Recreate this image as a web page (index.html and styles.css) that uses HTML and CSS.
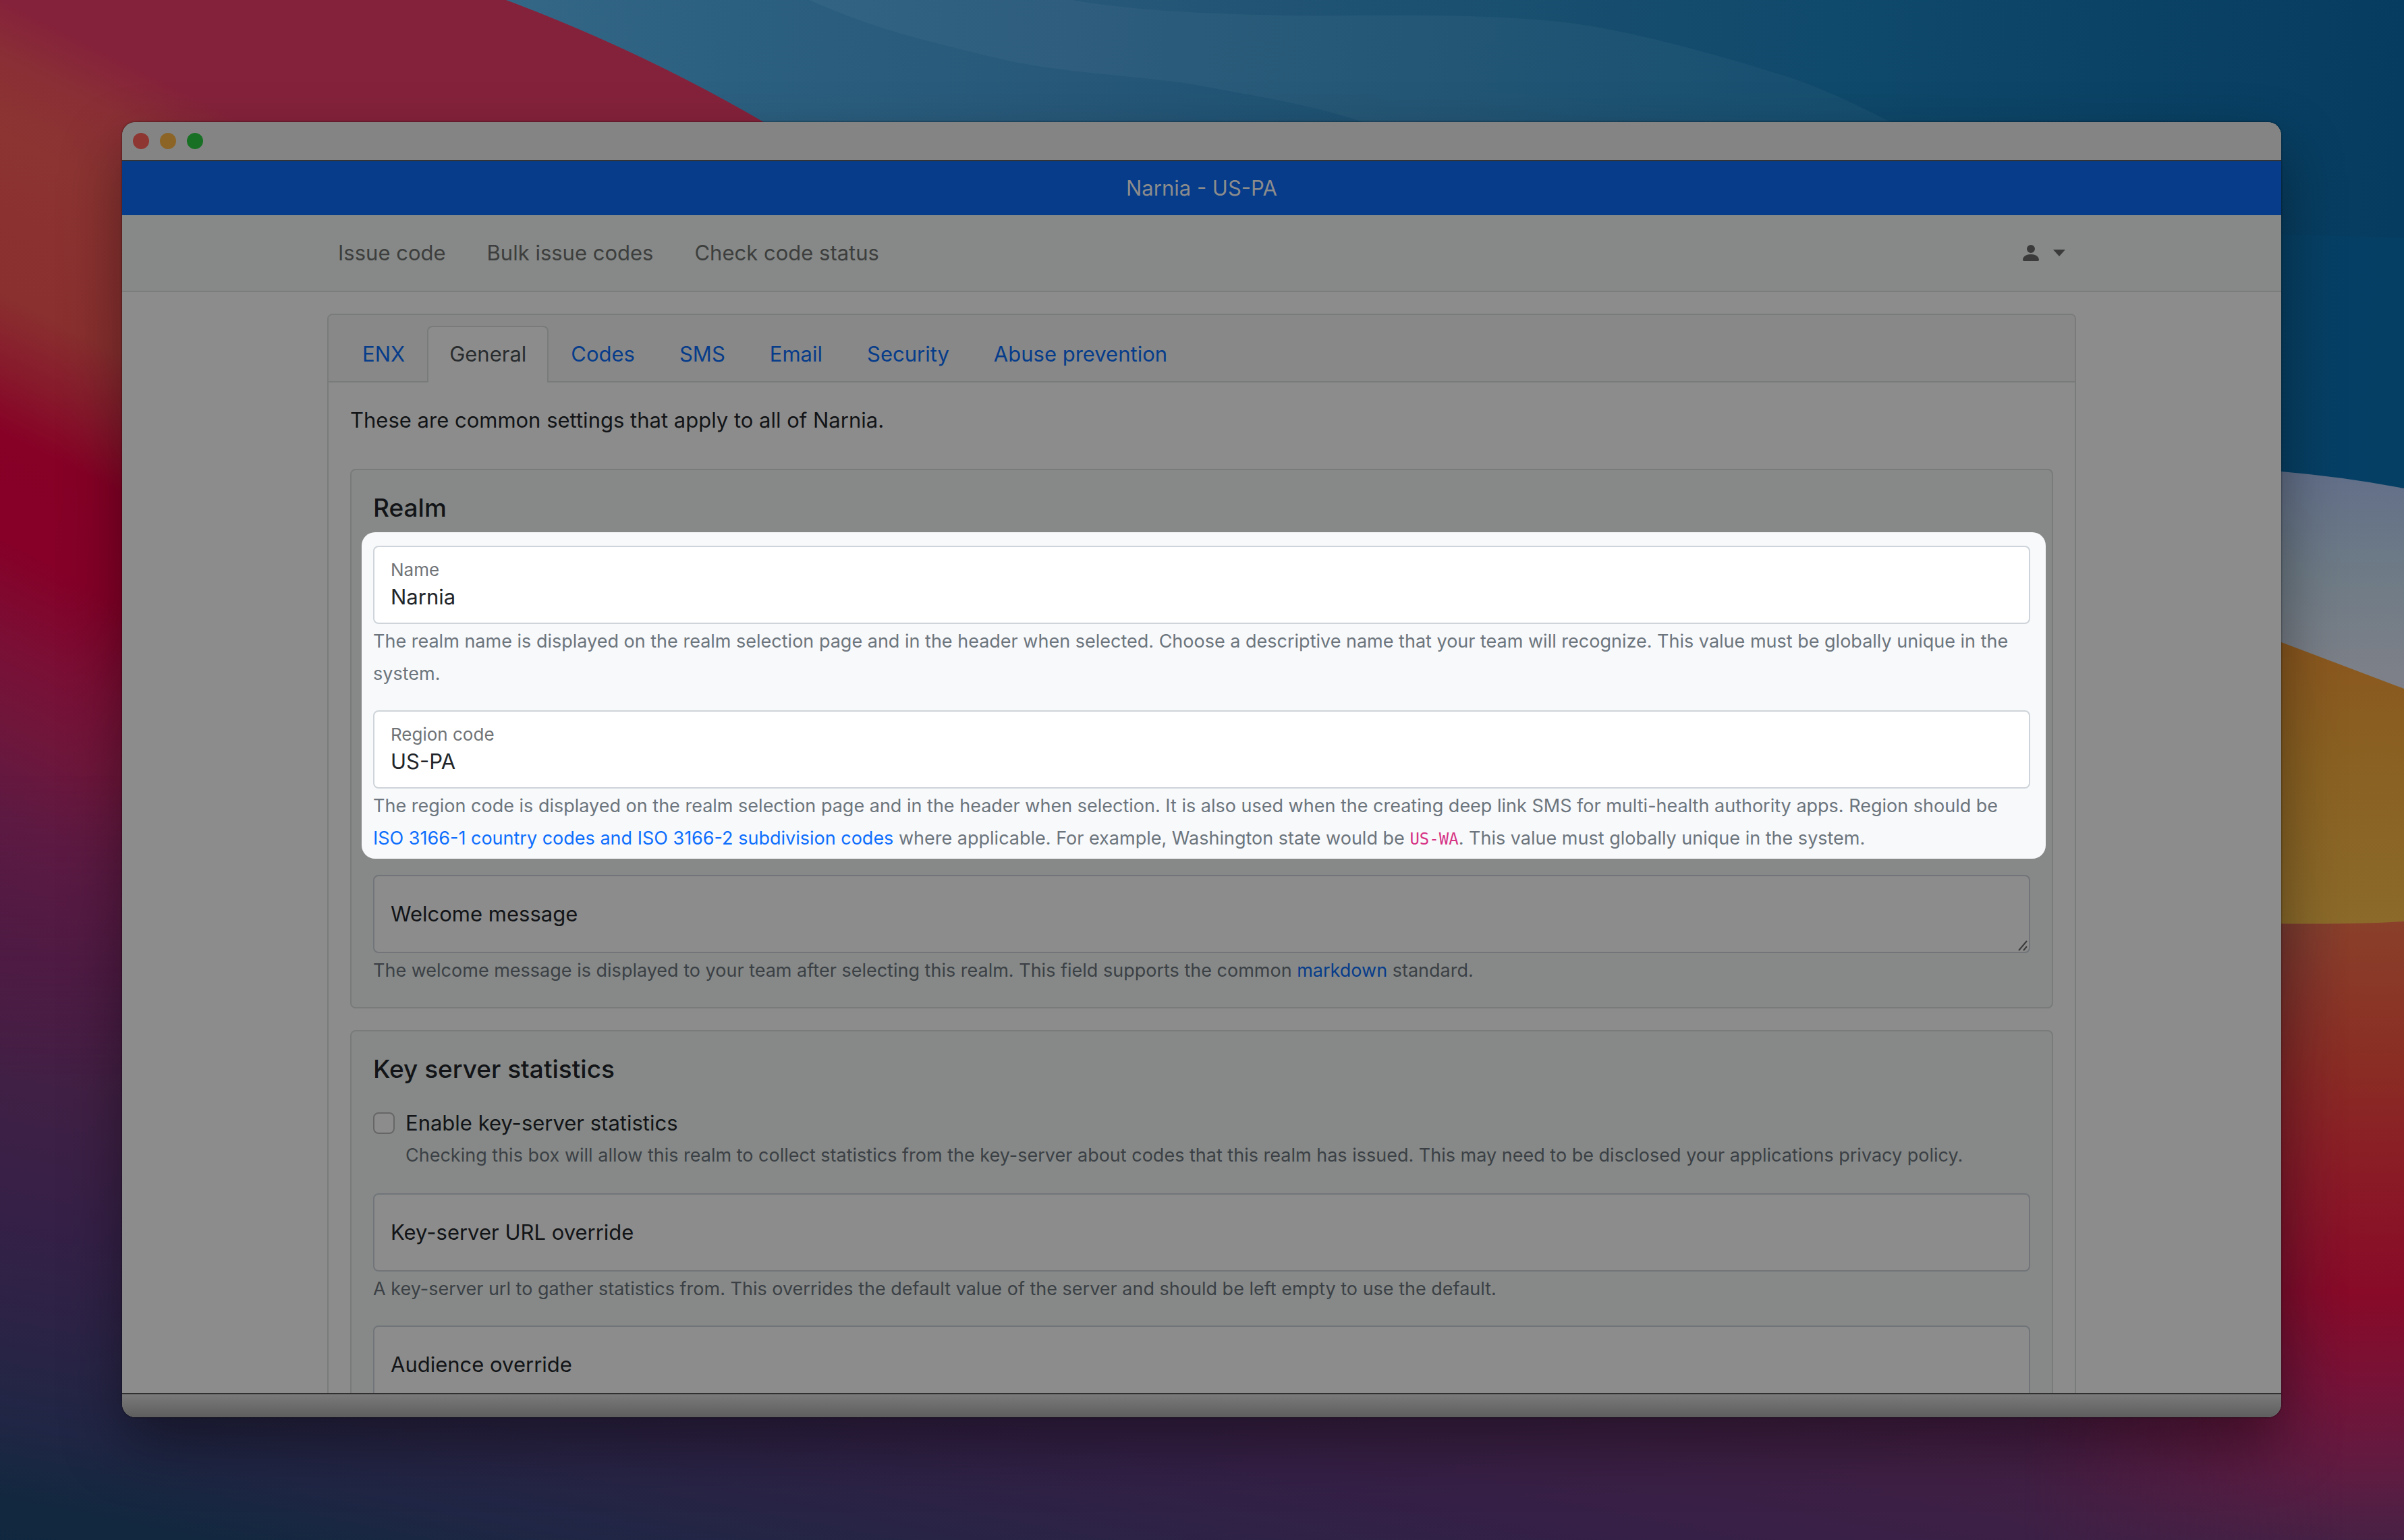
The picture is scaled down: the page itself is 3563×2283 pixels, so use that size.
FILE: index.html
```html
<!DOCTYPE html>
<html lang="en">
<head>
<meta charset="utf-8">
<meta name="viewport" content="width=device-width, initial-scale=1">
<title>Narnia - US-PA</title>
<link rel="stylesheet" href="styles.css">
</head>
<body>
<div class="desktop">
  <svg class="wallpaper" viewBox="0 0 3563 2283" preserveAspectRatio="none" aria-hidden="true">
    <defs>
      <linearGradient id="sky" gradientUnits="userSpaceOnUse" x1="750" y1="0" x2="3563" y2="120">
        <stop offset="0" stop-color="#346786"/><stop offset=".12" stop-color="#2c6080"/><stop offset=".3" stop-color="#275879"/>
        <stop offset=".5" stop-color="#1b5070"/><stop offset=".7" stop-color="#0f496b"/><stop offset="1" stop-color="#063c60"/>
      </linearGradient>
      <linearGradient id="ember" gradientUnits="userSpaceOnUse" x1="0" y1="0" x2="-560" y2="1120">
        <stop offset="0" stop-color="#85223b"/><stop offset=".06" stop-color="#8a2f35"/><stop offset=".14" stop-color="#8c3432"/>
        <stop offset=".31" stop-color="#8a302f"/><stop offset=".38" stop-color="#871c2c"/><stop offset=".46" stop-color="#870026"/>
        <stop offset=".57" stop-color="#860028"/><stop offset=".68" stop-color="#7a0f35"/><stop offset=".76" stop-color="#70163b"/>
        <stop offset=".86" stop-color="#5e1a42"/><stop offset="1" stop-color="#4e1b44"/>
      </linearGradient>
      <linearGradient id="dusk" gradientUnits="userSpaceOnUse" x1="0" y1="1000" x2="-250" y2="2250">
        <stop offset="0" stop-color="#741639"/><stop offset=".15" stop-color="#5e1a44"/><stop offset=".31" stop-color="#4f1b44"/>
        <stop offset=".46" stop-color="#412045"/><stop offset=".62" stop-color="#352047"/><stop offset=".73" stop-color="#2c2346"/>
        <stop offset=".85" stop-color="#202645"/><stop offset=".94" stop-color="#12283f"/><stop offset="1" stop-color="#10283f"/>
      </linearGradient>
      <linearGradient id="flame" gradientUnits="userSpaceOnUse" x1="0" y1="1366" x2="0" y2="2283">
        <stop offset="0" stop-color="#8a402a"/><stop offset=".22" stop-color="#8a2e24"/><stop offset=".42" stop-color="#8a1a26"/>
        <stop offset=".6" stop-color="#880a28"/><stop offset=".76" stop-color="#751338"/><stop offset=".9" stop-color="#5e1c42"/>
        <stop offset="1" stop-color="#472145"/>
      </linearGradient>
      <linearGradient id="mist" gradientUnits="userSpaceOnUse" x1="0" y1="699" x2="0" y2="1000">
        <stop offset="0" stop-color="#626f89"/><stop offset=".5" stop-color="#6e7b86"/><stop offset="1" stop-color="#7d8088"/>
      </linearGradient>
      <linearGradient id="sand" gradientUnits="userSpaceOnUse" x1="0" y1="970" x2="0" y2="1370">
        <stop offset="0" stop-color="#8a581f"/><stop offset=".4" stop-color="#8a6122"/><stop offset="1" stop-color="#8b6a2a"/>
      </linearGradient>
      <linearGradient id="fadeDown" gradientUnits="userSpaceOnUse" x1="0" y1="1150" x2="0" y2="1600">
        <stop offset="0" stop-color="#000"/><stop offset="1" stop-color="#fff"/>
      </linearGradient>
      <linearGradient id="fadeRight" gradientUnits="userSpaceOnUse" x1="3000" y1="0" x2="3480" y2="0">
        <stop offset="0" stop-color="#000"/><stop offset="1" stop-color="#fff"/>
      </linearGradient>
      <mask id="maskDown" maskUnits="userSpaceOnUse" x="0" y="0" width="3563" height="2283"><rect width="3563" height="2283" fill="url(#fadeDown)"/></mask>
      <mask id="maskRight" maskUnits="userSpaceOnUse" x="0" y="0" width="3563" height="2283"><rect width="3563" height="2283" fill="url(#fadeRight)"/></mask>
    </defs>
    <rect width="3563" height="2283" fill="url(#sky)"/>
    <path d="M1200 0C1300 45 1380 62 1477 86S1700 112 1784 128S1980 160 2070 200H2840C2770 165 2720 138 2659 117C2560 85 2420 45 2318 33S2080 22 1980 23S1700 20 1590 0Z" fill="#fff" fill-opacity=".035"/>
    <path d="M2900 345L3381 347L3563 353V724L2900 650Z" fill="#07456e" fill-opacity=".35"/>
    <path d="M0 0H750Q950 75 1132 181L1500 600V2283H0Z" fill="url(#ember)"/>
    <rect y="1150" width="3563" height="1133" fill="url(#dusk)" mask="url(#maskDown)"/>
    <rect x="3000" y="1366" width="563" height="917" fill="url(#flame)" mask="url(#maskRight)"/>
    <path d="M3300 690L3381 699Q3475 707 3563 724V1100H3300Z" fill="url(#mist)"/>
    <path d="M3300 925L3381 952L3563 1021V1366Q3475 1372 3300 1368Z" fill="url(#sand)"/>
  </svg>

  <div class="window">
    <div class="titlebar">
      <span class="light light-close"></span>
      <span class="light light-minimize"></span>
      <span class="light light-zoom"></span>
    </div>

    <div class="page">
      <div class="realm-banner">Narnia - US-PA</div>
      <header class="navbar">
        <div class="container navbar-inner">
          <nav class="navbar-links">
            <a href="#issue">Issue code</a>
            <a href="#bulk">Bulk issue codes</a>
            <a href="#status">Check code status</a>
          </nav>
          <button class="user-menu" type="button" aria-label="Account">
            <svg class="icon-person" viewBox="0 0 16 16" fill="currentColor" aria-hidden="true"><path d="M3 14s-1 0-1-1 1-4 6-4 6 3 6 4-1 1-1 1H3zm5-6a3 3 0 1 0 0-6 3 3 0 0 0 0 6z"/></svg>
            <span class="caret"></span>
          </button>
        </div>
      </header>

      <main class="container">
        <div class="card">
          <nav class="tabs">
            <a class="tab" href="#enx">ENX</a>
            <a class="tab tab-active" href="#general" aria-current="page">General</a>
            <a class="tab" href="#codes">Codes</a>
            <a class="tab" href="#sms">SMS</a>
            <a class="tab" href="#email">Email</a>
            <a class="tab" href="#security">Security</a>
            <a class="tab" href="#abuse">Abuse prevention</a>
          </nav>
          <form class="card-body">
            <p class="intro">These are common settings that apply to all of Narnia.</p>

            <section class="panel">
              <h5 class="panel-title">Realm</h5>
              <div class="spotlight">
                <div class="group">
                  <div class="field field-filled">
                    <input class="control" type="text" id="name" value="Narnia">
                    <label for="name">Name</label>
                  </div>
                  <small class="help">The realm name is displayed on the realm selection page and in the header when selected. Choose a descriptive name that your team will recognize. This value must be globally unique in the system.</small>
                </div>
                <div class="group">
                  <div class="field field-filled">
                    <input class="control" type="text" id="region" value="US-PA">
                    <label for="region">Region code</label>
                  </div>
                  <small class="help">The region code is displayed on the realm selection page and in the header when selection. It is also used when the creating deep link SMS for multi-health authority apps. Region should be <a href="#iso">ISO 3166-1 country codes and ISO 3166-2 subdivision codes</a> where applicable. For example, Washington state would be <code>US-WA</code>. This value must globally unique in the system.</small>
                </div>
              </div>
              <div class="group">
                <div class="field">
                  <textarea class="control" id="welcome" rows="1"></textarea>
                  <label for="welcome">Welcome message</label>
                  <svg class="grip" viewBox="0 0 16 16" aria-hidden="true"><path d="M2 15L14 1M9 15L14 9"/></svg>
                </div>
                <small class="help">The welcome message is displayed to your team after selecting this realm. This field supports the common <a href="#markdown">markdown</a> standard.</small>
              </div>
            </section>

            <section class="panel">
              <h5 class="panel-title">Key server statistics</h5>
              <div class="check">
                <input type="checkbox" id="stats">
                <div class="check-text">
                  <label for="stats">Enable key-server statistics</label>
                  <small class="help">Checking this box will allow this realm to collect statistics from the key-server about codes that this realm has issued. This may need to be disclosed your applications privacy policy.</small>
                </div>
              </div>
              <div class="group">
                <div class="field">
                  <input class="control" type="text" id="url">
                  <label for="url">Key-server URL override</label>
                </div>
                <small class="help">A key-server url to gather statistics from. This overrides the default value of the server and should be left empty to use the default.</small>
              </div>
              <div class="group">
                <div class="field">
                  <input class="control" type="text" id="audience">
                  <label for="audience">Audience override</label>
                </div>
              </div>
            </section>
          </form>
        </div>
      </main>
    </div>

    <div class="window-foot"></div>
  </div>
</div>
</body>
</html>
```
FILE: styles.css
```css
/* Palette of the page behind the dimming layer */
:root {
  --surface: #8c8c8c;
  --panel: #868988;
  --header: #888888;
  --text: #121417;
  --label: #121417;
  --muted: #3b4045;
  --border: #797b7b;
  --control-border: #717579;
  --link: #063c8a;
  --code: #761c49;
}

* { box-sizing: border-box; }

body {
  margin: 0;
  font-family: Inter, "Liberation Sans", sans-serif;
  font-size: 31px;
  line-height: 48px;
  color: var(--text);
}

a { color: var(--link); text-decoration: none; }

.desktop {
  position: relative;
  display: flex;
  height: 100vh;
  padding: 181px 182px 182px 181px;
  overflow: hidden;
  background: #202645;
}

.wallpaper {
  position: absolute;
  inset: 0;
  width: 100%;
  height: 100%;
}

.window {
  position: relative;
  flex: 1;
  display: flex;
  flex-direction: column;
  min-width: 0;
  overflow: hidden;
  border-radius: 20px;
  background: var(--surface);
  box-shadow: 0 40px 90px rgba(0, 0, 0, .4), 0 0 3px rgba(0, 0, 0, .6);
}

.titlebar {
  flex: none;
  display: flex;
  align-items: center;
  gap: 16px;
  height: 58px;
  padding: 0 16px;
  background: #848484;
  border-bottom: 2px solid #333;
}

.light { width: 24px; height: 24px; border-radius: 50%; }
.light-close { background: #8e3632; }
.light-minimize { background: #8c6426; }
.light-zoom { background: #187024; }

.page { flex: 1; min-height: 0; overflow: hidden; }

.window-foot {
  flex: none;
  height: 36px;
  border-top: 2px solid #303030;
  background: linear-gradient(#7a7a7a, #5e5e5e);
}

.realm-banner {
  height: 80px;
  line-height: 80px;
  text-align: center;
  color: #8c8c8c;
  background: #063c8a;
}

.container {
  max-width: 2640px;
  margin: 0 auto;
  padding: 0 24px;
}

.navbar {
  padding: 32px 0;
  background: var(--panel);
  border-bottom: 2px solid #7b7d7c;
}

.navbar-inner { display: flex; justify-content: space-between; align-items: center; }
.navbar-links { display: flex; gap: 61px; padding-left: 16px; }
.navbar-links a { color: #3d3e3d; }

.user-menu {
  display: flex;
  align-items: center;
  gap: 17px;
  padding: 0 16px;
  border: 0;
  background: none;
  color: #3a3b3a;
}

.icon-person { width: 32px; height: 32px; }

.caret {
  border: 9px solid transparent;
  border-top: 10px solid;
  border-bottom: 0;
}

.card {
  margin-top: 32px;
  border: 2px solid var(--border);
  border-radius: 8px;
}

.tabs {
  display: flex;
  padding: 16px 17px 0;
  background: var(--header);
  border-bottom: 2px solid var(--border);
  border-radius: 6px 6px 0 0;
}

.tab {
  padding: 16px 31px;
  border: 2px solid transparent;
  border-bottom: 0;
  border-radius: 8px 8px 0 0;
}

.tab-active {
  margin-bottom: -2px;
  padding-bottom: 18px;
  color: #292c2f;
  background: var(--surface);
  border-color: var(--border);
}

.card-body {
  display: flex;
  flex-direction: column;
  gap: 32px;
  padding: 32px;
}

.intro { margin: 0 0 16px; }

.panel {
  display: flex;
  flex-direction: column;
  gap: 32px;
  padding: 32px;
  border: 2px solid var(--border);
  border-radius: 8px;
  background: var(--panel);
}

.panel-title { margin: 0; font-size: 37px; font-weight: 500; }

/* The two fields lifted out of the dimming layer */
.spotlight {
  --surface: #fff;
  --text: #212529;
  --label: #707376;
  --muted: #6c757d;
  --control-border: #ced4da;
  --link: #0d6efd;
  --code: #d63384;
  display: flex;
  flex-direction: column;
  gap: 32px;
  margin: -20px -23px -8px -17px;
  padding: 20px 23px 8px 17px;
  border-radius: 20px;
  background: #f8f9fb;
}

.field { position: relative; display: flex; }

.control {
  width: 100%;
  height: 116px;
  padding: 52px 24px 18px;
  border: 2px solid var(--control-border);
  border-radius: 8px;
  background: var(--surface);
  color: var(--text);
  font: inherit;
  line-height: 38px;
  resize: none;
}

.field label {
  position: absolute;
  top: 34px;
  left: 26px;
  color: var(--label);
  pointer-events: none;
}

.field-filled label { top: 12px; font-size: 26px; }

.grip {
  position: absolute;
  right: 3px;
  bottom: 3px;
  width: 16px;
  height: 16px;
  fill: none;
  stroke: #3a3a3a;
  stroke-width: 2;
}

.help { display: block; font-size: 27px; color: var(--muted); }
.group .help { margin: 2px 0 -2px; }
code { font-family: "DejaVu Sans Mono", monospace; font-size: 24px; line-height: 1; color: var(--code); }

.check { display: flex; gap: 16px; }
.check-text { display: flex; flex-direction: column; }

.check input {
  appearance: none;
  flex: none;
  width: 32px;
  height: 32px;
  margin: 8px 0 0;
  border: 2px solid #666;
  border-radius: 8px;
  background: var(--surface);
}
```
